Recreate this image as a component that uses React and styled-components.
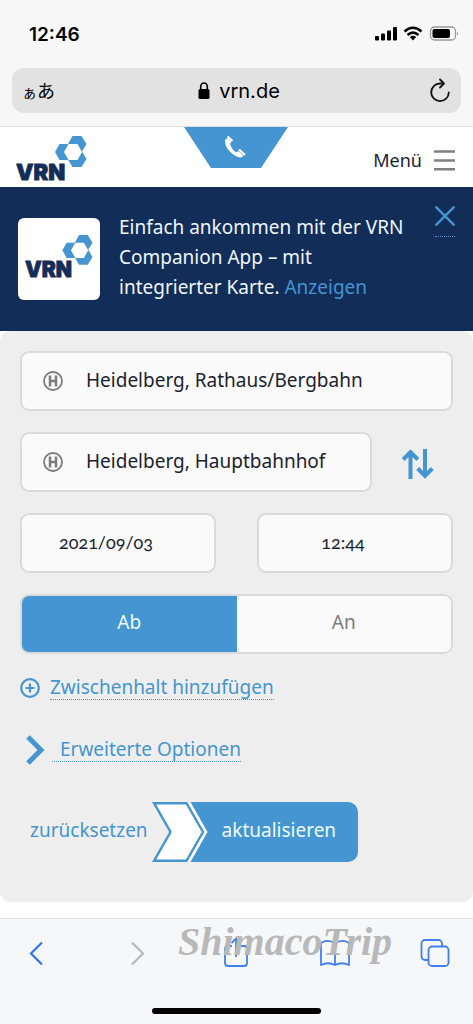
import { useState } from 'react'
import styled, { createGlobalStyle } from 'styled-components'

const App = () => {
  const [mode, setMode] = useState('ab')

  return (
    <Page>
      <GlobalStyle />

      <BrowserTop>
        <StatusBar>
          <Clock>12:46</Clock>
          <StatusIcons />
        </StatusBar>
        <AddressBar>
          <TextSize type="button" aria-label="Textgröße"><small>ぁ</small>あ</TextSize>
          <Domain>
            <LockIcon />
            vrn.de
          </Domain>
          <IconButton type="button" aria-label="Neu laden"><ReloadIcon /></IconButton>
        </AddressBar>
      </BrowserTop>

      <SiteHeader>
        <a href="#start" aria-label="VRN"><Logo width="71" /></a>
        <PhoneTab href="#telefon" aria-label="Telefon"><PhoneIcon /></PhoneTab>
        <MenuButton type="button">
          Menü
          <MenuIcon />
        </MenuButton>
      </SiteHeader>

      <Banner>
        <AppIcon><Logo width="68" /></AppIcon>
        <BannerText>
          Einfach ankommen mit der VRN Companion App – mit integrierter Karte. <a href="#app">Anzeigen</a>
        </BannerText>
        <CloseButton type="button" aria-label="Schließen"><CloseIcon /></CloseButton>
      </Banner>

      <SearchForm onSubmit={(e) => e.preventDefault()}>
        <Row>
          <Field>
            <StopIcon />
            <input aria-label="Start" defaultValue="Heidelberg, Rathaus/Bergbahn" />
          </Field>
        </Row>
        <Row>
          <Field>
            <StopIcon />
            <input aria-label="Ziel" defaultValue="Heidelberg, Hauptbahnhof" />
          </Field>
          <SwapButton type="button" aria-label="Start und Ziel tauschen"><SwapIcon /></SwapButton>
        </Row>
        <Row $gap="41px">
          <Field $numeric>
            <input aria-label="Datum" defaultValue="2021/09/03" />
          </Field>
          <Field $numeric>
            <input aria-label="Uhrzeit" defaultValue="12:44" />
          </Field>
        </Row>
        <Toggle>
          <ToggleButton type="button" $active={mode === 'ab'} aria-pressed={mode === 'ab'} onClick={() => setMode('ab')}>Ab</ToggleButton>
          <ToggleButton type="button" $active={mode === 'an'} aria-pressed={mode === 'an'} onClick={() => setMode('an')}>An</ToggleButton>
        </Toggle>

        <Links>
          <OptionLink href="#zwischenhalt">
            <PlusIcon />
            <span>Zwischenhalt hinzufügen</span>
          </OptionLink>
          <OptionLink href="#optionen" $indent>
            <ChevronIcon />
            <span>Erweiterte Optionen</span>
          </OptionLink>
        </Links>

        <Actions>
          <ResetButton type="reset">zurücksetzen</ResetButton>
          <SubmitButton type="submit">
            <ArrowShape />
            <span>aktualisieren</span>
          </SubmitButton>
        </Actions>
      </SearchForm>

      <BrowserBottom>
        <ToolBar>
          <IconButton type="button" aria-label="Zurück"><BackIcon /></IconButton>
          <IconButton type="button" aria-label="Vor"><ForwardIcon /></IconButton>
          <IconButton type="button" aria-label="Teilen"><ShareIcon /></IconButton>
          <IconButton type="button" aria-label="Lesezeichen"><BookIcon /></IconButton>
          <IconButton type="button" aria-label="Tabs"><TabsIcon /></IconButton>
        </ToolBar>
        <HomeIndicator />
        <Watermark>ShimacoTrip</Watermark>
      </BrowserBottom>
    </Page>
  )
}

export default App

/* icons */

const Logo = ({ width }) => (
  <svg width={width} viewBox="0 0 71 51" aria-hidden="true">
    <g fill="#4495d1">
      <path d="M52 8L56.500 0H65.500L70.500 8L66 15.500L70.500 23L65.500 31H56.500L52 23.500L60 16Z" />
      <path d="M39 16L43.500 8H52.500L57 16L52.500 24H43.500Z" />
    </g>
    <path d="M48 16L52.500 8H61.500L66 16L61.500 24H52.500Z" fill="#fff" />
    <text x="0" y="44" fill="#122d58" stroke="#122d58" strokeWidth="0.800" fontFamily="Inter, sans-serif" fontWeight="900" fontSize="22">VRN</text>
  </svg>
)

const StatusIcons = () => (
  <svg width="84" height="16" viewBox="0 0 84 16" aria-hidden="true">
    <rect x="0" y="10" width="4" height="4.500" rx="1" />
    <rect x="6" y="7.500" width="4" height="7" rx="1" />
    <rect x="12" y="4.500" width="4" height="10" rx="1" />
    <rect x="18" y="1" width="4" height="13.500" rx="1" />
    <g fill="none" stroke="#000" strokeWidth="2.600">
      <path d="M29.500 5.500Q38 -2 46.500 5.500" />
      <path d="M32.500 9Q38 4.300 43.500 9" />
    </g>
    <path d="M34.800 11Q38 8.600 41.200 11L38 14.500Z" />
    <rect x="55.500" y="1" width="25" height="13" rx="4" fill="none" stroke="#999" strokeWidth="1.300" />
    <rect x="57.500" y="3" width="17.500" height="9" rx="2" />
    <path d="M82 5.500Q84 7.500 82 9.500Z" fill="#999" />
  </svg>
)

const LockIcon = () => (
  <svg width="12" height="17" viewBox="0 0 12 17" aria-hidden="true">
    <path d="M2.700 8V4.500a3.300 3.500 0 0 1 6.600 0V8" fill="none" stroke="#000" strokeWidth="1.600" />
    <rect x="0.500" y="7" width="11" height="10" rx="1.500" />
  </svg>
)

const ReloadIcon = () => (
  <svg width="22" height="26" viewBox="0 0 22 26" fill="none" stroke="#111" strokeWidth="1.800" strokeLinecap="round" strokeLinejoin="round" aria-hidden="true">
    <path d="M19.800 14.500A8.800 8.800 0 1 1 11 5.500H14" />
    <path d="M11 1.500L15 5.500L11 9.500" />
  </svg>
)

const PhoneIcon = () => (
  <svg width="104" height="41" viewBox="0 0 104 41" aria-hidden="true">
    <path d="M0 0H104L77 41H27Z" fill="#4495d1" />
    <path d="M41 13Q41 21 47.500 26Q52.500 30.500 57.500 30.500L59.500 28.500L54.500 24L52.500 25.500Q47 22 46 16.500L47.500 15L43.500 11Z" fill="#fff" />
    <path d="M43.500 9.500L48.500 14M55 22.500L61 28" stroke="#fff" strokeWidth="2.200" />
  </svg>
)

const MenuIcon = () => (
  <svg width="21" height="21" viewBox="0 0 21 21" stroke="#7f7f7f" strokeWidth="2.400" aria-hidden="true">
    <path d="M0 1.500H21M0 10.500H21M0 19.300H21" />
  </svg>
)

const CloseIcon = () => (
  <svg width="20" height="20" viewBox="0 0 20 20" stroke="#4495d1" strokeWidth="2.400" aria-hidden="true">
    <path d="M0.500 0.500L19.500 19.500M19.500 0.500L0.500 19.500" />
  </svg>
)

const StopIcon = () => (
  <svg width="20" height="20" viewBox="0 0 20 20" fill="none" stroke="#7c7c7c" aria-hidden="true">
    <circle cx="10" cy="10" r="9" strokeWidth="1.800" />
    <path d="M7 4.500V15.500M13 4.500V15.500M7 10H13" strokeWidth="2.500" />
  </svg>
)

const SwapIcon = () => (
  <svg width="32" height="32" viewBox="0 0 32 32" fill="none" stroke="#4495d1" strokeWidth="4" aria-hidden="true">
    <path d="M8.500 31V4M1.200 11.500L8.500 4L15.800 11.500" />
    <path d="M23 1V28M15.700 20.500L23 28L30.300 20.500" />
  </svg>
)

const PlusIcon = () => (
  <svg width="20" height="20" viewBox="0 0 20 20" fill="none" stroke="#4495d1" strokeWidth="2.200" aria-hidden="true">
    <circle cx="10" cy="10" r="8.800" />
    <path d="M10 5.500V14.500M5.500 10H14.500" />
  </svg>
)

const ChevronIcon = () => (
  <svg width="19" height="30" viewBox="0 0 19 30" fill="none" stroke="#4495d1" strokeWidth="5" aria-hidden="true">
    <path d="M2 2L15 15L2 28" />
  </svg>
)

const ArrowShape = () => (
  <svg width="56" height="60" viewBox="0 0 56 60" aria-hidden="true">
    <path d="M35 0H56V60H35L53 30Z" fill="#4495d1" />
    <path d="M34 0H38.500L55.500 30L38.500 60H34L52 30Z" fill="#fff" />
    <path d="M2 1.200H34.500L51 30L34.500 58.800H2L18.500 30Z" fill="#fff" stroke="#4495d1" strokeWidth="2.400" />
  </svg>
)

const BackIcon = () => (
  <svg width="32" height="30" viewBox="0 0 32 30" fill="none" stroke="#3476e8" strokeWidth="2.200" aria-hidden="true">
    <path d="M22 4.500L11 15.500L22 26.500" />
  </svg>
)

const ForwardIcon = () => (
  <svg width="32" height="30" viewBox="0 0 32 30" fill="none" stroke="#b9b9b9" strokeWidth="2.200" aria-hidden="true">
    <path d="M12 4.500L23 15.500L12 26.500" />
  </svg>
)

const ShareIcon = () => (
  <svg width="32" height="30" viewBox="0 0 32 30" fill="none" stroke="#3f80ee" strokeWidth="1.800" aria-hidden="true">
    <path d="M12 8H8a3 3 0 0 0-3 3V25a3 3 0 0 0 3 3H24a3 3 0 0 0 3-3V11a3 3 0 0 0-3-3H20" />
    <path d="M16 19V0.500M11.500 5L16 0.500L20.500 5" />
  </svg>
)

const BookIcon = () => (
  <svg width="32" height="30" viewBox="0 0 32 30" fill="none" stroke="#3f80ee" strokeWidth="1.800" strokeLinejoin="round" aria-hidden="true">
    <path d="M16 5.500Q9 0.500 2 5V27Q9 23.500 16 27Q23 23.500 30 27V5Q23 0.500 16 5.500V27" />
  </svg>
)

const TabsIcon = () => (
  <svg width="32" height="30" viewBox="0 0 32 30" fill="none" stroke="#3f80ee" strokeWidth="1.800" aria-hidden="true">
    <path d="M9 22H6a3.500 3.500 0 0 1-3.500-3.500V5.500A3.500 3.500 0 0 1 6 2H19.500A3.500 3.500 0 0 1 23 5.500V8" />
    <rect x="9.500" y="8.500" width="20" height="19.500" rx="3.500" />
  </svg>
)

/* styles */

const GlobalStyle = createGlobalStyle`
  * {
    box-sizing: border-box;
  }
  body {
    margin: 0;
    background: #fff;
    color: #1a2230;
    font-family: 'Noto Sans', sans-serif;
    font-size: 19px;
  }
  button, input {
    font: inherit;
    color: inherit;
    border: 0;
    padding: 0;
    margin: 0;
    background: none;
  }
  button {
    cursor: pointer;
  }
  a {
    color: #4495d1;
    text-decoration: none;
  }
  svg {
    display: block;
    flex-shrink: 0;
  }
`

const Page = styled.div`
  display: flex;
  flex-direction: column;
  min-height: 100vh;
`

const BrowserTop = styled.div`
  background: #f7f7f7;
  border-bottom: 1px solid #dcdcdc;
  padding-bottom: 13px;
  color: #000;
`

const StatusBar = styled.div`
  display: flex;
  align-items: center;
  justify-content: space-between;
  height: 68px;
  padding: 0 14px 0 29px;
`

const Clock = styled.span`
  font-family: Inter, sans-serif;
  font-size: 19px;
  font-weight: 600;
`

const AddressBar = styled.div`
  display: flex;
  align-items: center;
  justify-content: space-between;
  height: 45px;
  margin: 0 12px;
  padding: 0 10px;
  border-radius: 12px;
  background: #e2e2e2;
`

const TextSize = styled.button`
  white-space: nowrap;
  font-family: 'Noto Sans CJK JP', sans-serif;
  font-size: 18px;
  line-height: 24px;

  small {
    font-size: 15px;
  }
`

const Domain = styled.div`
  display: flex;
  align-items: center;
  gap: 9px;
  margin-right: 6px;
  font-family: Inter, sans-serif;
  font-size: 20px;
`

const IconButton = styled.button`
  display: flex;
  align-items: center;
  justify-content: center;
  min-width: 22px;
`

const SiteHeader = styled.header`
  display: grid;
  grid-template-columns: 1fr auto 1fr;
  height: 60px;
  padding: 0 18px 0 16px;

  > a:first-child {
    padding-top: 9px;
  }
`

const PhoneTab = styled.a`
  justify-self: center;
`

const MenuButton = styled.button`
  display: flex;
  align-items: center;
  justify-self: end;
  gap: 12px;
  padding-top: 6px;
  font-size: 18px;
`

const Banner = styled.section`
  display: flex;
  align-items: flex-start;
  min-height: 144px;
  padding: 18px;
  background: #122d58;
`

const AppIcon = styled.div`
  display: flex;
  align-items: center;
  justify-content: center;
  flex-shrink: 0;
  width: 82px;
  height: 82px;
  margin-top: 13px;
  border-radius: 6px;
  background: #fff;
`

const BannerText = styled.p`
  flex: 1;
  margin: 7px 20px 0 19px;
  color: #eef6ff;
  line-height: 30px;
`

const CloseButton = styled.button`
  padding: 1px 0 10px;
  border-bottom: 1px dotted #4495d1;
`

const SearchForm = styled.form`
  padding: 20px 20px 40px;
  border-radius: 10px;
  background: #eee;
`

const Row = styled.div`
  display: flex;
  gap: ${(props) => props.$gap || '0'};
  margin-bottom: 21px;
`

const Field = styled.label`
  display: flex;
  align-items: center;
  flex: 1;
  gap: 23px;
  min-width: 0;
  height: 60px;
  padding: ${(props) => (props.$numeric ? '0 44px 0 20px' : '0 21px')};
  border: 2px solid #dadada;
  border-radius: 9px;
  background: #fafafa;

  input {
    flex: 1;
    width: 100%;
    min-width: 0;
    padding-bottom: 3px;
    outline: 0;
    ${(props) => props.$numeric && `
      text-align: center;
      font-family: Lato, sans-serif;
      font-size: 18px;
      font-variant-numeric: oldstyle-nums;
    `}
  }
`

const SwapButton = styled.button`
  display: flex;
  align-items: center;
  justify-content: flex-end;
  width: 81px;
  padding: 4px 19px 0 0;
`

const Toggle = styled.div`
  display: flex;
  height: 60px;
  overflow: hidden;
  border: 2px solid #dadada;
  border-radius: 9px;
  background: #fafafa;
`

const ToggleButton = styled.button`
  flex: 1;
  padding-bottom: 4px;
  background: ${(props) => (props.$active ? '#4495d1' : '#fafafa')};
  color: ${(props) => (props.$active ? '#eefaff' : '#7c7c7c')};
`

const Links = styled.nav`
  display: flex;
  flex-direction: column;
  align-items: flex-start;
  gap: 32px;
  padding-top: 19px;
`

const OptionLink = styled.a`
  display: flex;
  align-items: center;
  gap: ${(props) => (props.$indent ? '7px' : '10px')};
  height: 30px;
  padding-left: ${(props) => (props.$indent ? '6px' : '0')};

  span {
    margin-bottom: 2px;
    padding-left: ${(props) => (props.$indent ? '8px' : '0')};
    border-bottom: 1px dotted #4495d1;
    line-height: 24px;
  }
`

const Actions = styled.div`
  display: flex;
  align-items: center;
  gap: 4px;
  margin-top: 37px;
  padding-left: 10px;
`

const ResetButton = styled.button`
  padding-bottom: 4px;
  color: #4495d1;
`

const SubmitButton = styled.button`
  display: flex;
  align-items: center;
  color: #eefaff;

  span {
    height: 60px;
    padding: 0 22px 0 14px;
    border-radius: 0 10px 10px 0;
    background: #4495d1;
    line-height: 56px;
  }
`

const BrowserBottom = styled.footer`
  position: relative;
  display: flex;
  flex-direction: column;
  flex: 1;
  margin-top: 16px;
  border-top: 1px solid #dcdcdc;
  background: #f6f7f8;
`

const ToolBar = styled.div`
  display: flex;
  justify-content: space-between;
  padding: 19px 22px 0 20px;
`

const HomeIndicator = styled.div`
  width: 169px;
  height: 6px;
  margin: auto auto 10px;
  border-radius: 3px;
  background: #000;
`

/* lies over the toolbar icons */
const Watermark = styled.span`
  position: absolute;
  top: -1px;
  left: 178px;
  color: #b8b8b8;
  font-family: 'Liberation Serif', serif;
  font-size: 40px;
  font-style: italic;
  font-weight: 700;
  line-height: 48px;
`
